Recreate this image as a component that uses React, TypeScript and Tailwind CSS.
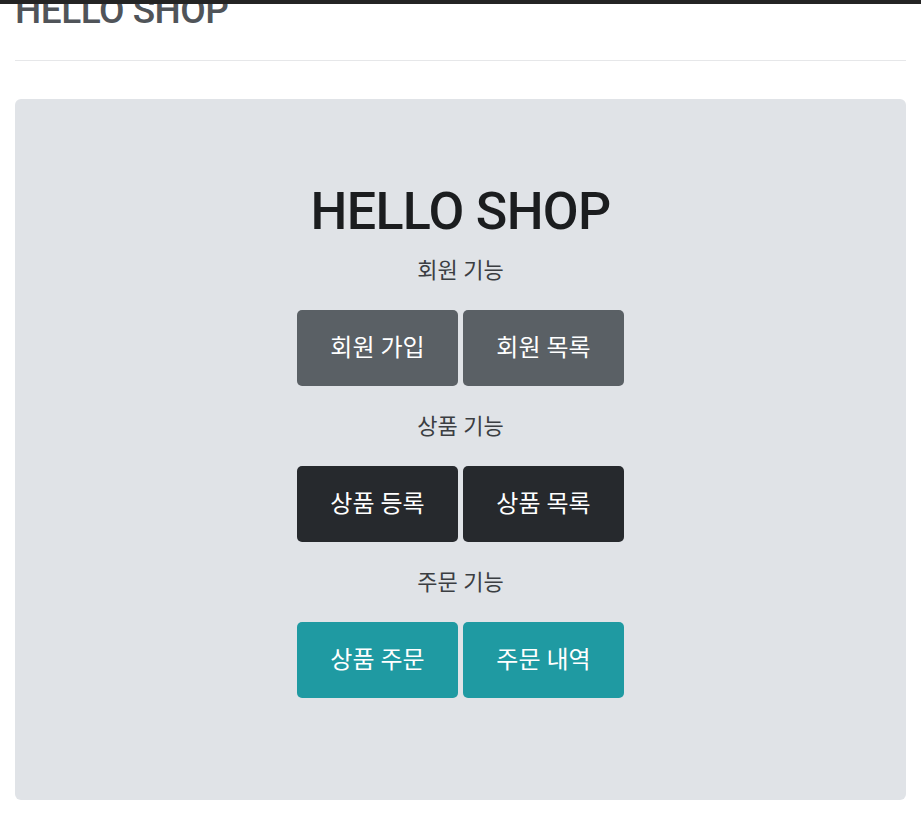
const groups = [
  {
    title: "회원 기능",
    tone: "bg-[#5a6065]",
    items: ["회원 가입", "회원 목록"],
  },
  {
    title: "상품 기능",
    tone: "bg-[#26292d]",
    items: ["상품 등록", "상품 목록"],
  },
  {
    title: "주문 기능",
    tone: "bg-[#1f9aa2]",
    items: ["상품 주문", "주문 내역"],
  },
];

const font = "font-['Roboto','Noto_Sans_CJK_KR',sans-serif]";

export default function App() {
  return (
    <div className={`min-h-[818px] bg-white ${font}`}>
      <div className="relative z-10 h-[4px] bg-[#242424]" />
      <div className="px-[15px]">
        <div className="flex h-[25px] items-end overflow-hidden">
          <h3 className="text-[37px] font-medium leading-none tracking-[-0.5px] text-[#505459]">HELLO SHOP</h3>
        </div>
        <div className="mt-[31px] border-b border-[#e6e7e9]" />

        <div className="mt-[38px] flex h-[701px] flex-col items-center rounded-[6px] bg-[#e0e3e7] pt-[81px]">
          <h1 className="h-[64px] text-[52px] font-medium leading-[64px] tracking-[-0.7px] text-[#1b1d1f]">HELLO SHOP</h1>

          {groups.map((group, i) => (
            <div key={group.title} className={`flex flex-col items-center ${i === 0 ? "mt-[9px]" : "mt-[23px]"}`}>
              <p className="h-[36px] text-[22px] leading-[36px] text-[#3b3e42]">{group.title}</p>
              <div className="mt-[21px] flex gap-[5px]">
                {group.items.map((label) => (
                  <a
                    key={label}
                    href="#"
                    className={`flex h-[76px] w-[161px] items-center justify-center rounded-[5px] text-[24px] text-white ${group.tone} ${
                      label === "상품 목록" ? "bg-[#1c1e21]" : ""
                    }`}
                  >
                    {label}
                  </a>
                ))}
              </div>
            </div>
          ))}
        </div>
      </div>
    </div>
  );
}
